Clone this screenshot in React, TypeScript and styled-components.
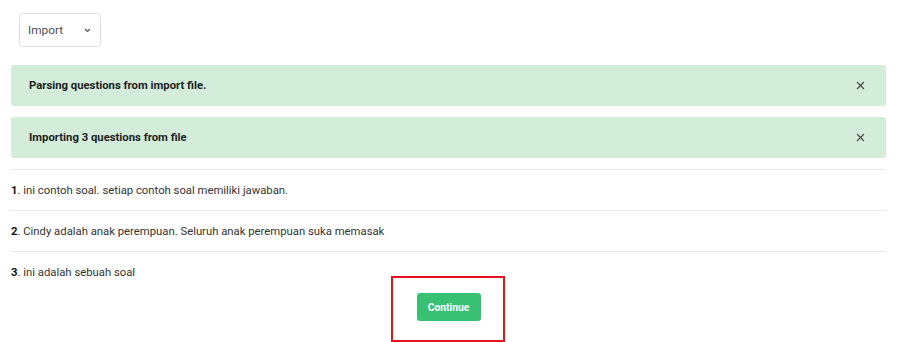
import React from "react";
import styled, { createGlobalStyle } from "styled-components";

const GlobalStyle = createGlobalStyle`
    html, body {
        margin: 0;
        padding: 0;
        background: #ffffff;
    }
    body {
        font-family: Roboto, "Liberation Sans", sans-serif;
        color: #212529;
    }
`;

const Page = styled.div`
    width: 875px;
    padding: 13px 0 0 11px;
    box-sizing: content-box;
`;

const Toolbar = styled.div`
    display: flex;
    padding-left: 8px;
    margin-bottom: 18px;
`;

const Select = styled.div`
    width: 82px;
    height: 34px;
    box-sizing: border-box;
    border: 1px solid #dee2e6;
    border-radius: 4px;
    display: flex;
    align-items: center;
    justify-content: space-between;
    padding: 0 9px 0 8px;
    font-size: 11.8px;
    color: #495057;
`;

const Alert = styled.div`
    height: 41px;
    box-sizing: border-box;
    margin-bottom: 11px;
    background: #d4ecda;
    border-radius: 3px;
    display: flex;
    align-items: center;
    justify-content: space-between;
    padding: 0 21px 0 18px;
    font-size: 11.3px;
    font-weight: 700;
    color: #1b1e21;
`;

const Close = styled.button`
    border: 0;
    background: none;
    padding: 0;
    display: flex;
    color: #4a4f4b;
    cursor: pointer;
`;

const List = styled.ol`
    list-style: none;
    margin: 0;
    padding: 0;
    border-top: 1px solid #e6e9ee;
`;

const Row = styled.li<{ $last?: boolean }>`
    height: 41px;
    box-sizing: border-box;
    display: flex;
    align-items: center;
    font-size: 11.3px;
    color: #333;
    border-bottom: ${(p) => (p.$last ? "0" : "1px solid #e6e9ee")};
    b {
        font-weight: 700;
        color: #111;
    }
`;

const Footer = styled.div`
    display: flex;
    justify-content: center;
    padding-bottom: 22px;
`;

const ButtonWrap = styled.div`
    position: relative;
`;

const Highlight = styled.div`
    position: absolute;
    left: -26px;
    right: -24px;
    top: -17px;
    bottom: -21px;
    border: 2px solid #e8121a;
    pointer-events: none;
`;

const Button = styled.button`
    width: 64px;
    height: 28px;
    border: 0;
    border-radius: 3px;
    background: #38c172;
    color: #fff;
    font-family: Roboto, "Liberation Sans", sans-serif;
    font-size: 10.3px;
    font-weight: 700;
    cursor: pointer;
`;

const questions = [
    "ini contoh soal. setiap contoh soal memiliki jawaban.",
    "Cindy adalah anak perempuan. Seluruh anak perempuan suka memasak",
    "ini adalah sebuah soal",
];

const alerts = ["Parsing questions from import file.", "Importing 3 questions from file"];

const CloseIcon = () => (
    <svg width="9" height="9" viewBox="0 0 9 9">
        <path d="M1 1 L8 8 M8 1 L1 8" stroke="currentColor" strokeWidth="1.3" />
    </svg>
);

const Chevron = () => (
    <svg width="7" height="5" viewBox="0 0 7 5">
        <path d="M1 1 L3.5 3.5 L6 1" stroke="#555" strokeWidth="1.1" fill="none" />
    </svg>
);

export default function App() {
    return (
        <>
            <GlobalStyle />
            <Page>
                <Toolbar>
                    <Select>
                        <span>Import</span>
                        <Chevron />
                    </Select>
                </Toolbar>
                {alerts.map((a) => (
                    <Alert key={a}>
                        <span>{a}</span>
                        <Close aria-label="close">
                            <CloseIcon />
                        </Close>
                    </Alert>
                ))}
                <List>
                    {questions.map((q, i) => (
                        <Row key={i} $last={i === questions.length - 1}>
                            <span>
                                <b>{i + 1}</b>. {q}
                            </span>
                        </Row>
                    ))}
                </List>
                <Footer>
                    <ButtonWrap>
                        <Highlight />
                        <Button>Continue</Button>
                    </ButtonWrap>
                </Footer>
            </Page>
        </>
    );
}
